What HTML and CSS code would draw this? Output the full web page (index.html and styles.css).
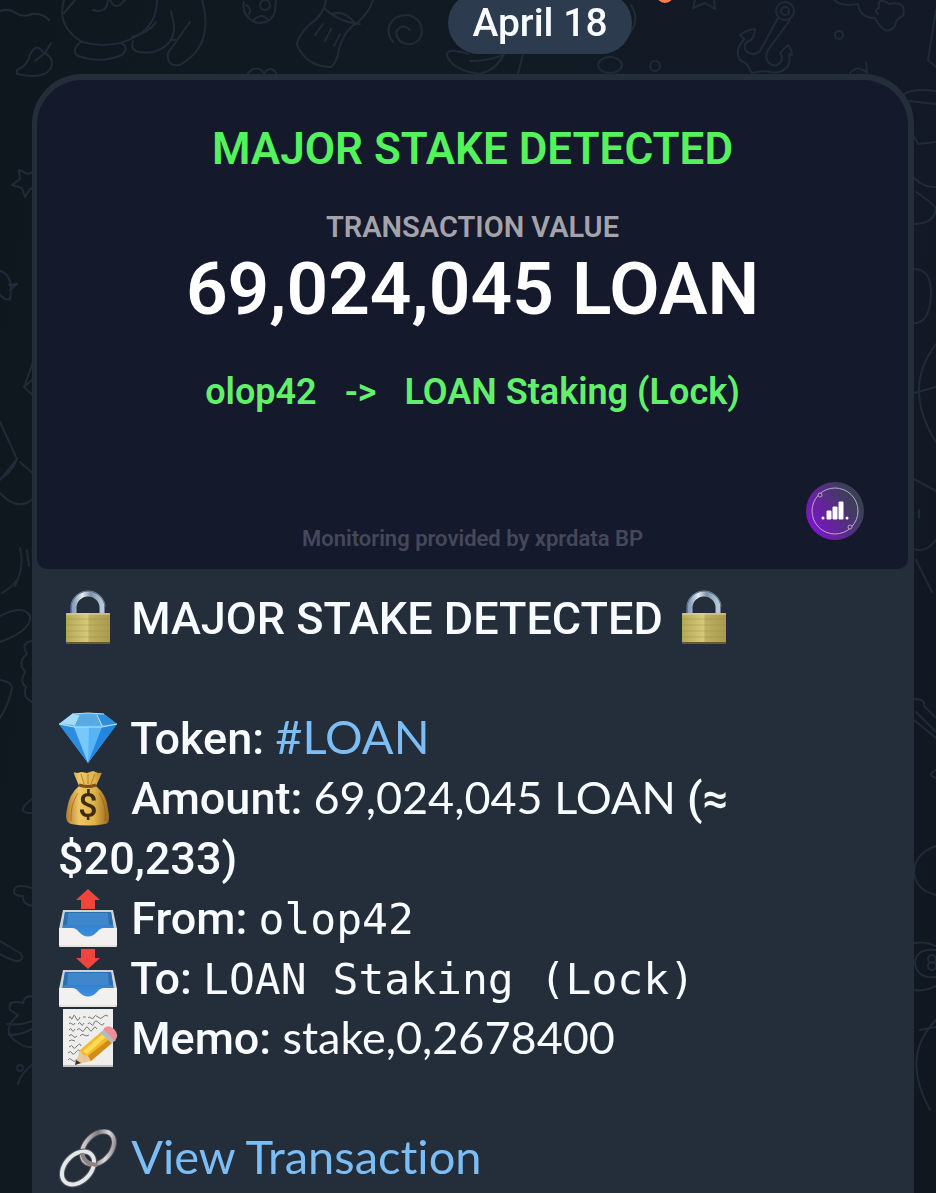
FILE: index.html
```html
<!DOCTYPE html>
<html lang="en">
<head>
  <meta charset="UTF-8">
  <meta name="viewport" content="width=device-width, initial-scale=1.0">
  <title>Stake alerts</title>
  <link rel="stylesheet" href="styles.css">
</head>
<body>
  <!-- chat wallpaper -->
  <svg class="wallpaper" viewBox="0 0 936 1193" preserveAspectRatio="xMidYMin slice" aria-hidden="true">
    <path d="M0 11q9-3 16 2t16 1q11-1 17 6"/>
    <path d="M17 70q10-4 13-15q6-13 13-3q12 6 8 16q-7 12-34 6zM35 61l10-8 6-10"/>
    <path d="M64 0q-8 26 18 42q30 8 55-6q20-12 20-36M64 13l11-13M93 10q14 4 15-10M110 0q6 12 15 0"/>
    <path d="M82 41q-12 9-4 15q22 8 44-1q8-8-1-12M133 41q-5 14 20 11q22-6 21-27l-3-14M190 22l-22 31q-2 14 12 12q35-20 22-65M132 37q18-5 24-15M170 40h6"/>
    <path d="M244 2q-3 12 10 20q16 4 21-10l1-12M246 5q6 3 3 9M254 20q8-8 14 0M248 73q9-9 16 0q7-8 12 0"/>
    <circle cx="265" cy="5" r="5"/>
    <path d="M326 0q-2 15-17 25q-12 12-12 20q10 22 34 22q6-4 8-18q6-20 18-26q12-10 16-23M324 8q14 14 36 16M332 14q12-4 22 8M323 24l-8 11M331 29l-6 12M340 34l-6 12"/>
    <path d="M393 42q-10-13 2-24q16-8 25 5q6 16-8 21q-14 2-16-12q6-10 14-2"/>
    <path d="M468 54q-25-8-20 4q8 14 35 16M504 54q-8 16-22 19M523 54l-5 20M470 61q22 0 34-7"/>
    <path d="M631 5q9 14-1 28"/>
    <ellipse cx="610" cy="65" rx="12" ry="8"/>
    <circle cx="655" cy="66" r="5"/>
    <path d="M693 8l2-8M693 8l12-5 10 6-1-9"/>
    <circle cx="785" cy="11" r="9"/>
    <circle cx="785" cy="11" r="4"/>
    <path d="M778 18l-18 33q-7 6-14 0q-4-8 5-11q4-5 4-11q-9 1-15 6l4 4q-10 12-4 21q8 3 11 12M790 20l-22 30q-4 8 1 13q6 5 11 0q4-5 0-10l8-8q4 5 4 10l-3-1q2 10-3 14q-6 6-16 4q-6-2-18 1"/>
    <path d="M834 0q8 7 24 4q2 14 17 14q10 20 20 8q1-8 8-10q4-16-14-12q-12-8-10 4q-6 2-1 6"/>
    <circle cx="839" cy="35" r="4"/>
    <path d="M850 73q8-9 17 0l-1-11M936 10l-8 50 8 7M904 94q10-6 32-3M909 101l27 3"/>
    <path d="M914 136l4 8 18-2M914 178q10 10 22 9M916 192q18 12 20 17M914 224q20 0 22-15M914 269q18 0 17 27q-2 28-17 27M936 344q-34 44 0 98M914 393l22-6M914 479l22 12M914 549q12 4 22-9M916 560l16 32M919 510v8"/>
    <path d="M19 170l9 4 8-3-2 9 4 7-8 2-5 8-3-9-10-3 8-6zM0 271q14 4 10 28q-4 2-10-4M9 285l8-1-7 6"/>
    <path d="M38 345q-5 18-14 42l14 13M24 387l10-9M0 422l17 37-17 21M17 459q-5 14-17 20M20 462l18 16M0 493q20 22 38 1M20 548q5 18-5 38M27 550l2 16"/>
    <path d="M2 593q10-6 15-13M0 616q24-12 30 0q2 14-30 26M0 680q12 2 12 8q-3 16-12 30M32 641q-12 2-5 13q-10 8-2 18q-6 10 1 15q-4 10 6 15M32 799q-16 12-4 14h4"/>
    <path d="M32 888q-19-6-18 5q4 4 9 3q-1 8 9 10M0 941l20 12q6 8-4 8q-8-2-16-7M32 996q-8 0-9 7q-16-4-13 7l8 5q-18 16-1 27q8 6 15 5M7 1024q12 2 25-3M9 1035q12 0 23-6M18 1084q4-12 14-19"/>
    <circle cx="20" cy="1068" r="3"/>
    <path d="M914 699q12 0 10 7l12 12M914 720l22 18M916 712l20 20M936 846q-22 8-22 27q2 17 22 22M914 943q10-2 22 3M914 990q10 2 22-4M936 950q-20-2-21 13q2 16 21 14M936 770q-10 5 0 8M936 1020q-36 36-6 90M920 1030l16-3"/>
    <circle cx="932" cy="959" r="4"/>
    <circle cx="932" cy="966" r="4"/>
    <circle class="reaction" cx="665" cy="-6" r="9"/>
  </svg>

  <!-- emoji shapes, all on a 60x60 box -->
  <svg class="defs" aria-hidden="true">
    <defs>
      <linearGradient id="brass"><stop offset="0" stop-color="#b5a85a"/><stop offset=".5" stop-color="#d6ca79"/><stop offset=".52" stop-color="#bdb062"/><stop offset="1" stop-color="#aa9c4c"/></linearGradient>
      <linearGradient id="steel"><stop offset="0" stop-color="#8ba2b8"/><stop offset=".3" stop-color="#e4edf4"/><stop offset=".6" stop-color="#7c92a6"/><stop offset="1" stop-color="#b7cad8"/></linearGradient>
      <linearGradient id="gold"><stop offset="0" stop-color="#b67b28"/><stop offset=".3" stop-color="#edc767"/><stop offset=".65" stop-color="#e0b548"/><stop offset="1" stop-color="#9a661e"/></linearGradient>
      <linearGradient id="blue" x2="0" y2="1"><stop offset="0" stop-color="#2771b8"/><stop offset="1" stop-color="#3d91e2"/></linearGradient>
      <linearGradient id="chain" x2="1" y2="1"><stop offset="0" stop-color="#f4f6f8"/><stop offset=".45" stop-color="#807b7d"/><stop offset=".7" stop-color="#d9dde0"/><stop offset="1" stop-color="#66666b"/></linearGradient>
      <linearGradient id="logo" x1="0" y1=".8" x2="1" y2=".2"><stop offset="0" stop-color="#8412d4"/><stop offset=".35" stop-color="#65239e"/><stop offset=".75" stop-color="#3f3d5e"/><stop offset="1" stop-color="#35434f"/></linearGradient>
    </defs>
    <symbol id="lock" viewBox="0 0 60 60">
      <path d="M16 25V19a14 14 0 0 1 28 0V25" fill="none" stroke="url(#steel)" stroke-width="5"/>
      <path d="M13 24V18a17 16 0 0 1 34 0" fill="none" stroke="#6f8ba8"/>
      <rect x="8" y="24" width="44" height="31" rx="1" fill="url(#brass)"/>
      <path d="M8 30h44M8 36h44M8 42h44M8 48h44" stroke="#8e8240" opacity=".35"/>
      <path d="M8 25h44" stroke="#e3dc98"/>
      <path d="M8 54h44" stroke="#655c2c" stroke-width="2"/>
    </symbol>
    <symbol id="gem" viewBox="0 0 60 60">
      <path d="M14 5L30 4 46 5 59 15 30 54 1 15z" fill="#4fb0f3"/>
      <path d="M14 5l7 1-5 10-15-1z" fill="#a4dcf8"/>
      <path d="M21 6h18l6 10H16z" fill="#5aa9e0"/>
      <path d="M39 6l7-1 13 10-14 1z" fill="#2f8edb"/>
      <path d="M1 15l15 3 14 36z" fill="#2b8ce0"/>
      <path d="M16 18h28L30 54z" fill="#78c8fa"/>
      <path d="M31 18h13L30 54z" fill="#57b4f5"/>
      <path d="M44 18l15-3-29 39z" fill="#2386e0"/>
      <path d="M1 15l15 3h28l15-3M14 5l16-1 16 1M16 17l5-11M44 17L39 6" fill="none" stroke="#b9e5fb"/>
    </symbol>
    <symbol id="bag" viewBox="0 0 60 60">
      <path d="M21 17L16 5q-1-3 3-1l5-1 5 1 6-2 5 2q5-1 3 2l-5 11q11 9 12 23 3 15-3 15-17 3-34 0-7-2-4-15 2-15 12-23z" fill="url(#gold)"/>
      <path d="M23 5l3 10M30 5v10M37 5l-4 10M20 24q-8 12-7 28M41 24q8 12 6 28" fill="none" stroke="#8c5b1b" opacity=".6"/>
      <path d="M21 16q9 3 17 0" fill="none" stroke="#80501b" stroke-width="3"/>
      <text class="dollar" x="30" y="48" text-anchor="middle">$</text>
    </symbol>
    <symbol id="tray" viewBox="0 0 60 60">
      <path d="M5 21h50l4 19v16q0 2-2 2H3q-2 0-2-2V40z" fill="#cfd2d3"/>
      <path d="M7 23h46l3 17-10 8H14L4 40z" fill="url(#blue)"/>
      <path d="M7 23h46l2 13H5z" fill="#2c6fae"/>
      <path d="M10 24h40l1 12H9z" fill="#3f86cb"/>
      <path d="M1 39h13q4 0 7 4 9 9 18 0 3-4 7-4h13v17q0 2-2 2H3q-2 0-2-2z" fill="#f2f1ef"/>
      <path d="M1 57h58" stroke="#d8d7d4"/>
    </symbol>
    <symbol id="outbox" viewBox="0 0 60 60">
      <path d="M30 0l12 11h-5v9H23v-9h-5z" fill="#f0453c"/>
      <use href="#tray"/>
    </symbol>
    <symbol id="inbox" viewBox="0 0 60 60">
      <path d="M30 20L18 9h5V0h14v9h5z" fill="#f0453c"/>
      <use href="#tray"/>
    </symbol>
    <symbol id="memo" viewBox="0 0 60 60">
      <rect x="5" y="0" width="50" height="58" fill="#eeeeec"/>
      <path d="M5 57h50" stroke="#c0c0be" stroke-width="2"/>
      <path d="M11 9q1-3 2 0t2-1 3 1 4-1M25 8h3M30 9q1-2 3 0t3-1 4 0 5 0 5-1M11 15q1-2 3 0t3-1M20 15q2-3 3 0t3-1M30 15q1-3 3 0t3-1 5 0 5 0M11 21q2-3 3 0t3-1M19 21q2-3 4 0t4-1 4 0 4 0 4 0M11 27q2-3 4 0t4 0M22 27q2-3 4-1t5 0M11 32q2-2 6 0M11 38q3-3 4 0t4-1 4 0M10 44q3-3 4 0t4-1 4 0M10 51q1-3 4 0t5-1" fill="none" stroke="#777"/>
      <path d="M17 56l5-15 6 1 5 10z" fill="#e8c79a"/>
      <path d="M22 41l21-18 11 11-21 18-3-5-5-1z" fill="#f5b92d"/>
      <path d="M25 42l21-18 3 3-20 18z" fill="#ffda55"/>
      <path d="M33 52l21-18-4-3-20 16z" fill="#d18d17"/>
      <path d="M42 24l4-4 12 11-4 3z" fill="#b5bcc1"/>
      <path d="M46 19q5-4 10 1 5 5 2 10l-2 1-10-10z" fill="#ee8e98"/>
      <path d="M17 56l1-5 5 3z" fill="#333"/>
    </symbol>
    <symbol id="chain-link" viewBox="0 0 60 60">
      <g fill="none">
        <ellipse cx="40" cy="19" rx="19" ry="13" transform="rotate(-47 40 19)" stroke="#4f4a4e" stroke-width="6"/>
        <ellipse cx="40" cy="19" rx="19" ry="13" transform="rotate(-47 40 19)" stroke="url(#chain)" stroke-width="4"/>
        <ellipse cx="20" cy="39" rx="19" ry="13" transform="rotate(-47 20 39)" stroke="#56565b" stroke-width="6"/>
        <ellipse cx="20" cy="39" rx="19" ry="13" transform="rotate(-47 20 39)" stroke="#e3e8eb" stroke-width="4"/>
        <path d="M24 24q2 11 15 12" stroke="#8e8583" stroke-width="4"/>
      </g>
    </symbol>
  </svg>

  <main class="chat">
    <div class="date-row">
      <time class="date" datetime="04-18">April 18</time>
    </div>

    <article class="bubble">
      <div class="card">
        <h1 class="card-title">MAJOR STAKE DETECTED</h1>
        <p class="card-label">TRANSACTION VALUE</p>
        <p class="card-value">69,024,045 LOAN</p>
        <p class="card-route"><span>olop42</span><span>-&gt;</span><span>LOAN Staking (Lock)</span></p>
        <p class="card-footer">Monitoring provided by xprdata BP</p>
        <svg class="card-logo" viewBox="0 0 58 58" role="img" aria-label="xprdata">
          <circle cx="29" cy="29" r="29" fill="url(#logo)"/>
          <circle cx="29" cy="29" r="23" fill="none" stroke="#b9a8cf"/>
          <circle cx="14" cy="13" r="2" fill="#4c2a80" stroke="#b9a8cf"/>
          <circle cx="44" cy="45" r="2" fill="#4c2a80" stroke="#b9a8cf"/>
          <path d="M21 29h4v8h-4zM27 25h4v12h-4zM33 20h4v17h-4z" fill="#fff" stroke="#fff"/>
          <circle cx="17" cy="36" r="1.5" fill="#fff"/>
          <circle cx="41" cy="36" r="1.5" fill="#fff"/>
        </svg>
      </div>

      <div class="message">
        <p><svg class="emoji"><use href="#lock"/></svg> MAJOR STAKE DETECTED <svg class="emoji"><use href="#lock"/></svg></p>
        <br>
        <p><svg class="emoji"><use href="#gem"/></svg> Token: <a href="#LOAN">#LOAN</a></p>
        <p><svg class="emoji"><use href="#bag"/></svg> Amount: <span class="value">69,024,045 LOAN</span> (≈ $20,233)</p>
        <p><svg class="emoji"><use href="#outbox"/></svg> From: <code>olop42</code></p>
        <p><svg class="emoji"><use href="#inbox"/></svg> To: <code>LOAN Staking (Lock)</code></p>
        <p><svg class="emoji"><use href="#memo"/></svg> Memo: <span class="value">stake,0,2678400</span></p>
        <br>
        <p><svg class="emoji"><use href="#chain-link"/></svg> <a href="#transaction">View Transaction</a></p>
      </div>
    </article>
  </main>
</body>
</html>
```
FILE: styles.css
```css
* {
  box-sizing: border-box;
}

body {
  margin: 0;
  min-height: 100vh;
  font-family: Roboto, sans-serif;
  color: #f8fbff;
  background: linear-gradient(100deg, #0f171e 0%, #111a23 40%, #131927 80%, #10171f 100%);
}

p,
h1 {
  margin: 0;
}

.wallpaper {
  position: fixed;
  inset: 0;
  z-index: -1;
  width: 100%;
  height: 100%;
  fill: none;
  stroke: #202b37;
  stroke-width: 2;
  stroke-linecap: round;
  stroke-linejoin: round;
}

.reaction {
  fill: #ff7d4d;
  stroke: none;
}

.defs {
  position: absolute;
  width: 0;
  height: 0;
}

.chat {
  display: flex;
  flex-direction: column;
  min-height: 100vh;
  overflow: hidden;
}

.date-row {
  display: flex;
  justify-content: center;
  padding-left: 144px;
  margin-top: -8px;
}

.date {
  padding: 0 24px;
  border-radius: 31px;
  background: #2d3b4e;
  font-size: 39px;
  font-weight: 500;
  line-height: 62px;
}

.bubble {
  flex: 1;
  margin: 20px 22px 0 32px;
  padding: 6px 6px 0 5px;
  border-radius: 50px 50px 0 0;
  background: #232e3a;
}

.card {
  position: relative;
  padding: 42px 20px 15px;
  border-radius: 45px 45px 10px 10px;
  background: #14192c;
  text-align: center;
}

.card-title {
  color: #54f25c;
  font-size: 44px;
  font-weight: 600;
  line-height: 54px;
}

.card-label {
  margin-top: 32px;
  color: #a3a3a9;
  font-size: 29px;
  font-weight: 600;
  line-height: 38px;
}

.card-value {
  color: #fff;
  font-size: 73px;
  font-weight: 600;
  line-height: 86px;
}

.card-route {
  display: flex;
  justify-content: center;
  gap: 28px;
  margin-top: 38px;
  color: #62f06c;
  font-size: 36px;
  font-weight: 600;
  line-height: 44px;
}

.card-footer {
  margin-top: 110px;
  color: #45485a;
  font-size: 22px;
  font-weight: 600;
  line-height: 30px;
}

.card-logo {
  position: absolute;
  right: 44px;
  bottom: 29px;
  width: 58px;
  height: 58px;
}

.message {
  padding: 20px 24px 4px 21px;
  font-size: 45px;
  font-weight: 500;
  line-height: 60px;
}

.value,
.message a {
  font-family: Lato, sans-serif;
  font-size: 45px;
  font-weight: 400;
  font-variant-ligatures: none;
  line-height: 1;
}

.message a {
  color: #7dbdf5;
  font-size: 47px;
  text-decoration: none;
}

.message code {
  font-family: "DejaVu Sans Mono", monospace;
  font-size: 43px;
  font-weight: 400;
  line-height: 1;
}

.emoji {
  width: 60px;
  height: 60px;
  margin-right: 2px;
  vertical-align: top;
}

.dollar {
  fill: #3f2a14;
  font-family: Roboto, sans-serif;
  font-size: 34px;
  font-weight: 500;
}
```
